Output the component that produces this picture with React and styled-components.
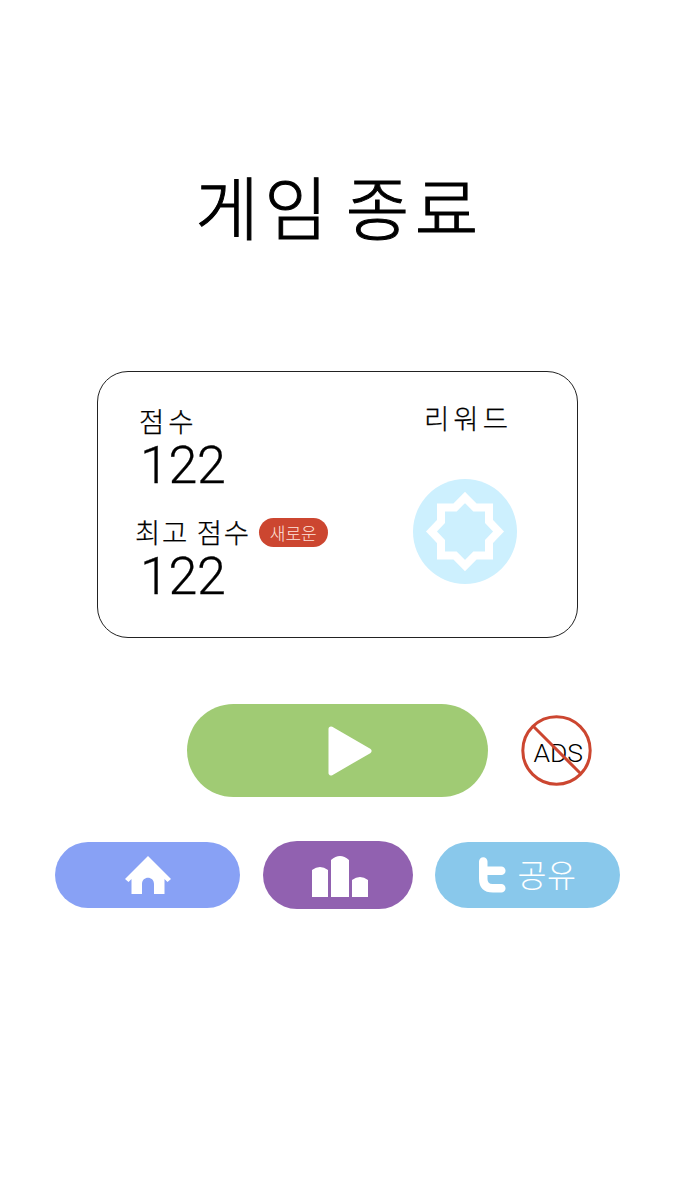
import React from "react";
import styled, { createGlobalStyle } from "styled-components";

const GlobalStyle = createGlobalStyle`
  *, *::before, *::after { box-sizing: border-box; }
  body { margin: 0; background: #fff; color: #000; }
  button { border: 0; padding: 0; margin: 0; cursor: pointer; }
  svg { display: block; flex: none; }
`;

const korean = `"Noto Sans CJK KR", sans-serif`;

const Screen = styled.main`
  width: 675px;
  height: 1200px;
  padding-top: 160px;
  overflow: hidden;
  display: flex;
  flex-direction: column;
  align-items: center;
  background: #fff;
  font-family: ${korean};
`;

const Title = styled.h1`
  margin: 0;
  padding-left: 4px;
  height: 90px;
  line-height: 90px;
  font-size: 69px;
  font-weight: 300;
  letter-spacing: 5.5px;
  word-spacing: -8px;
  -webkit-text-stroke: 1px #000;
  white-space: nowrap;
`;

const Card = styled.section`
  width: 481px;
  height: 267px;
  margin-top: 121px;
  padding: 31px 59px 0 37px;
  display: flex;
  justify-content: space-between;
  border: 1.3px solid #222;
  border-radius: 31px;
`;

const Scores = styled.div`
  display: flex;
  flex-direction: column;
`;

const ScoreBlock = styled.div`
  height: 111px;
`;

const LabelRow = styled.div`
  display: flex;
  align-items: center;
  gap: 8px;
  height: 36px;
`;

const Label = styled.span`
  font-size: 27.5px;
  font-weight: 300;
  line-height: 34px;
  letter-spacing: ${(p) => p.$spacing || 0}px;
  margin-left: ${(p) => p.$inset || 0}px;
  margin-bottom: 3px;
  -webkit-text-stroke: 0.25px #000;
  white-space: nowrap;
`;

const Score = styled.div`
  margin-left: 5px;
  height: 54px;
  line-height: 54px;
  font-family: Roboto, "Liberation Sans", sans-serif;
  font-size: 52px;
  font-weight: 300;
  letter-spacing: -0.3px;
  -webkit-text-stroke: 0.3px #000;
`;

const Badge = styled.span`
  width: 69px;
  height: 29px;
  border-radius: 15px;
  display: flex;
  align-items: center;
  justify-content: center;
  background: #cc4630;
  color: #ffe4dc;
  font-size: 17px;
  font-weight: 300;
  line-height: 29px;
`;

const Reward = styled.div`
  width: 106px;
  display: flex;
  flex-direction: column;
  align-items: center;
  gap: 42px;
`;

const RewardLabel = styled(Label)`
  padding-left: 6px;
  margin-top: -3px;
`;

const PlayRow = styled.div`
  width: 481px;
  margin-top: 65.6px;
  padding-left: 90px;
  display: flex;
  align-items: center;
  gap: 33px;
`;

const Pill = styled.button`
  width: ${(p) => p.$w}px;
  height: ${(p) => p.$h}px;
  border-radius: ${(p) => p.$h / 2}px;
  background: ${(p) => p.$color};
  display: flex;
  align-items: center;
  justify-content: center;
  flex: none;
`;

const PlayPill = styled(Pill)`
  padding: 1px 0 0 24px;
`;

const RankPill = styled(Pill)`
  padding: 3px 0 0 5px;
`;

const AdsButton = styled.button`
  width: 71px;
  height: 71px;
  background: none;
  flex: none;
`;

const ActionRow = styled.nav`
  margin-top: 44.4px;
  display: flex;
  align-items: center;
  gap: 22.5px;
`;

const ShareText = styled.span`
  color: #fff;
  font-family: ${korean};
  font-size: 31.5px;
  font-weight: 300;
  line-height: 40px;
  margin: -4px 0 0 12px;
  letter-spacing: 0.5px;
`;

const RewardIcon = () => (
  <svg width="104" height="105" viewBox="0 0 104 105">
    <ellipse cx="52" cy="52.5" rx="52" ry="52.5" fill="#cdf0fe" />
    <path
      d="M52 18.5 62 28.5H76V42.5L85.500 52.500L76 62.500V76.500H62L52 86.500L42 76.500H28V62.500L18.500 52.500L28 42.500V28.500H42Z"
      fill="none"
      stroke="#fff"
      strokeWidth="8"
    />
  </svg>
);

const PlayIcon = () => (
  <svg width="44" height="50" viewBox="0 0 44 50">
    <path d="M3 3 41 25 3 47Z" fill="#fff" stroke="#fff" strokeWidth="5" strokeLinejoin="round" />
  </svg>
);

const AdsIcon = () => (
  <svg width="71" height="71" viewBox="0 0 71 71">
    <text x="12.5" y="47" fontFamily="Roboto, sans-serif" fontWeight="300" fontSize="26.500" textLength="49.500" lengthAdjust="spacing">ADS</text>
    <circle cx="35.500" cy="35.500" r="33.700" fill="none" stroke="#cc4630" strokeWidth="3" />
    <path d="M12 11 59.500 58.500" stroke="#cc4630" strokeWidth="3" />
  </svg>
);

const HomeIcon = () => (
  <svg width="46" height="38" viewBox="0 0 46 38">
    <path d="M23 0 46 23 42.500 26 39.500 23V38H29V28C29 19.500 17 19.500 17 28V38H6.500V23L3.500 26 0 23Z" fill="#fff" />
  </svg>
);

const RankIcon = () => (
  <svg width="56" height="41" viewBox="0 0 56 41">
    <path d="M0 41V14Q8 8 16 14V41ZM19 41V4Q28-4 37 4V41ZM40 41V24Q48 18 56 24V41Z" fill="#fff" />
  </svg>
);

const TwitterIcon = () => (
  <svg width="27" height="36" viewBox="0 0 27 36">
    <path d="M0 4.500A4.250 4.250 0 0 1 8.500 4.500V9.500H22.300A4.250 4.250 0 0 1 22.300 18H8.500V22Q8.500 27 13.500 27H22.300A4.250 4.250 0 0 1 22.300 35.500H14Q0 35.500 0 21.500Z" fill="#fff" />
  </svg>
);

export default function App() {
  return (
    <>
      <GlobalStyle />
      <Screen>
        <Title>게임 종료</Title>
        <Card>
          <Scores>
            <ScoreBlock>
              <LabelRow>
                <Label $inset={4} $spacing={4}>점수</Label>
              </LabelRow>
              <Score>122</Score>
            </ScoreBlock>
            <ScoreBlock>
              <LabelRow>
                <Label $spacing={1.7}>최고 점수</Label>
                <Badge>새로운</Badge>
              </LabelRow>
              <Score>122</Score>
            </ScoreBlock>
          </Scores>
          <Reward>
            <RewardLabel $spacing={4}>리워드</RewardLabel>
            <RewardIcon />
          </Reward>
        </Card>
        <PlayRow>
          <PlayPill $w={301} $h={93} $color="#a0cb74" aria-label="Play">
            <PlayIcon />
          </PlayPill>
          <AdsButton aria-label="ADS">
            <AdsIcon />
          </AdsButton>
        </PlayRow>
        <ActionRow>
          <Pill $w={185} $h={66} $color="#88a1f5" aria-label="Home">
            <HomeIcon />
          </Pill>
          <RankPill $w={150} $h={68} $color="#9161b0" aria-label="Ranking">
            <RankIcon />
          </RankPill>
          <Pill $w={185} $h={66} $color="#89c8eb">
            <TwitterIcon />
            <ShareText>공유</ShareText>
          </Pill>
        </ActionRow>
      </Screen>
    </>
  );
}
